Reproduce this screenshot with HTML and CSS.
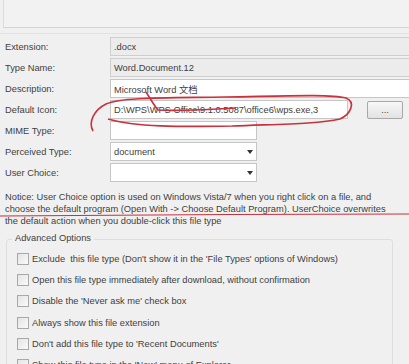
FILE: index.html
```html
<!doctype html>
<html>

<head>
  <title>File Type Editor</title>
  <link rel="stylesheet" href="styles.css">
</head>

<body>
  <div class="window">
    <div class="top-panel"></div>
    <div class="top-rule"></div>

    <div class="fields">
      <label>Extension:</label>
      <div class="field readonly">.docx</div>

      <label>Type Name:</label>
      <div class="field readonly">Word.Document.12</div>

      <label>Description:</label>
      <div class="field">Microsoft Word 文档</div>

      <label>Default Icon:</label>
      <div class="icon-row">
        <div class="field icon-path">D:\WPS\WPS Office\9.1.0.5087\office6\wps.exe,3</div>
        <button class="browse" type="button">...</button>
      </div>

      <label>MIME Type:</label>
      <div class="field short"></div>

      <label>Perceived Type:</label>
      <div class="field short combo">document<span class="arrow"></span></div>

      <label>User Choice:</label>
      <div class="field short combo"><span class="arrow"></span></div>
    </div>

    <p class="notice">Notice: User Choice option is used on Windows Vista/7 when you right click on a file, and<br>
      choose the default program (Open With -&gt; Choose Default Program). UserChoice overwrites<br>
      the default action when you double-click this file type</p>

    <div class="advanced">
      <div class="legend">Advanced Options</div>
      <div class="check"><span class="box"></span>Exclude &nbsp;this file type (Don't show it in the 'File Types' options of Windows)</div>
      <div class="check"><span class="box"></span>Open this file type immediately after download, without confirmation</div>
      <div class="check"><span class="box"></span>Disable the 'Never ask me' check box</div>
      <div class="check"><span class="box"></span>Always show this file extension</div>
      <div class="check"><span class="box"></span>Don't add this file type to 'Recent Documents'</div>
      <div class="check"><span class="box"></span>Show this file type in the 'New' menu of Explorer</div>
    </div>

    <!-- hand drawn red marks over the screenshot -->
    <svg class="scribble" width="409" height="364" viewBox="0 0 409 364">
      <path d="M93 131 C88 122 94 110 106 104 C122 97 165 98 225 97 C285 96 330 94 346 98 C356 102 351 114 340 119 C318 124 280 124 232 126 C180 127 135 127 108 119"
        fill="none" stroke="#c8323c" stroke-width="1.6" />
      <path d="M146 92 C150 98 153 104 158 110 C176 111 202 110 236 108"
        fill="none" stroke="#c8323c" stroke-width="1.6" />
      <path d="M0 216 C120 215 280 214 409 214" fill="none" stroke="#c8323c" stroke-width="1.2" />
    </svg>
  </div>
</body>

</html>
```

FILE: styles.css
```css
body {
  margin: 0;
  background-color: #f0f0f0;
  overflow: hidden;
}

body * {
  font-family: 'Liberation Sans', Arial, 'Noto Sans CJK SC', sans-serif;
  font-size: 9.3px;
  color: #404040;
}

.window {
  position: relative;
  width: 409px;
  height: 364px;
  overflow: hidden;
}

.top-panel {
  height: 27px;
  margin-left: 3px;
  border-left: 1px solid #dcdcdc;
  border-bottom: 1px solid #d4d4d4;
  background-color: #f2f2f2;
}

.top-rule {
  height: 2px;
  margin-top: 3px;
  border-bottom: 1px solid #e2e2e2;
}

.fields {
  display: grid;
  grid-template-columns: 105px 1fr;
  grid-auto-rows: 19px;
  row-gap: 2px;
  padding-left: 5px;
  margin-top: 3px;
}

.fields label {
  display: flex;
  align-items: center;
}

.field {
  display: flex;
  align-items: center;
  box-sizing: border-box;
  height: 19px;
  padding-left: 3px;
  border: 1px solid #c6c6c6;
  background-color: #fff;
  margin-right: -4px;
}

.field.readonly {
  background-color: #ececec;
  border-color: #cfcfcf;
}

.icon-row {
  display: flex;
  align-items: center;
  gap: 19px;
}

.icon-path {
  width: 238px;
  margin-right: 0;
}

.browse {
  width: 36px;
  height: 18px;
  padding: 0;
  border: 1px solid #a8a8a8;
  border-radius: 2px;
  background: linear-gradient(#f8f8f8, #e2e2e2);
  font-size: 9px;
  line-height: 10px;
}

.field.short {
  width: 147px;
  margin-right: 0;
}

.combo {
  position: relative;
}

.arrow {
  position: absolute;
  right: 3px;
  top: 7px;
  border-left: 3px solid transparent;
  border-right: 3px solid transparent;
  border-top: 4px solid #333;
}

.notice {
  margin: 9px 0 0 5px;
  line-height: 12px;
  white-space: nowrap;
}

.advanced {
  position: relative;
  margin: 12px 16px 0 6px;
  height: 200px;
  border: 1px solid #dedede;
  border-radius: 3px;
  padding: 8px 0 0 10px;
}

.legend {
  position: absolute;
  top: -7px;
  left: 5px;
  padding: 0 3px;
  background-color: #f0f0f0;
}

.check {
  display: flex;
  align-items: center;
  height: 21.3px;
  white-space: nowrap;
}

.box {
  width: 10px;
  height: 10px;
  margin-right: 3px;
  border: 1px solid #a9a9a9;
  background: linear-gradient(135deg, #e4e4e4, #fafafa);
}

.scribble {
  position: absolute;
  top: 0;
  left: 0;
  pointer-events: none;
}
```
